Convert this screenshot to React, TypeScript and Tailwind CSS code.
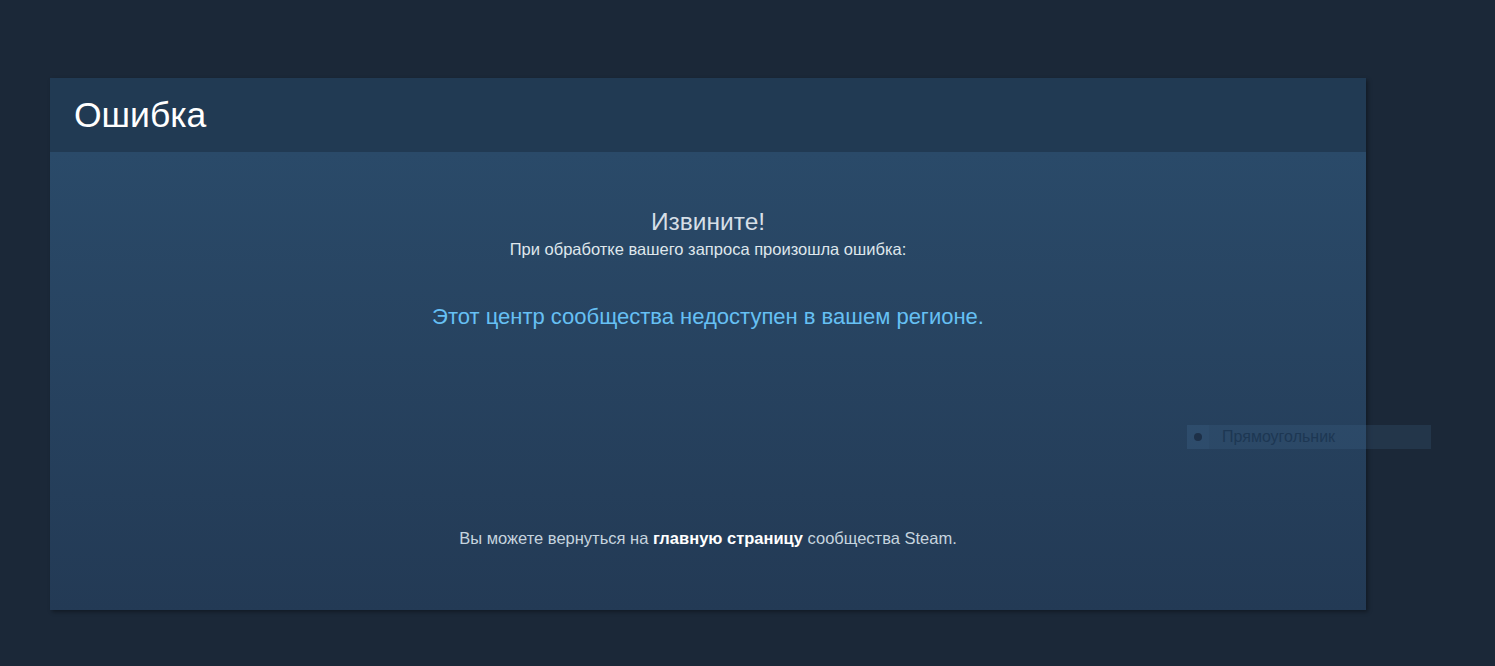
import { FC } from 'react';

const App: FC = () => {
  return (
    <div
      className="relative min-h-[666px] w-full bg-[#1b2838] pt-[78px] pl-[50px]"
      style={{ fontFamily: '"Liberation Sans", Arial, sans-serif' }}
    >
      {/* B Error panel */}
      <div className="w-[1316px] shadow-[2px_2px_4px_rgba(0,0,0,0.35)]">
        <div className="h-[74px] bg-[#213a53] pl-6 flex items-center">
          <h1 className="text-[35.5px] leading-none text-white pt-[2px]">Ошибка</h1>
        </div>
        <div className="h-[458px] bg-gradient-to-b from-[#2a4a69] to-[#233a55] flex flex-col items-center">
          <div className="mt-[55px] text-[24.5px] leading-[30px] text-[#d6dfe7]">Извините!</div>
          <div className="mt-[2px] text-[16.5px] leading-[20px] text-[#dfe6ec]">
            При обработке вашего запроса произошла ошибка:
          </div>
          <div className="mt-[45px] text-[22px] leading-[26px] text-[#66c0f4]">
            Этот центр сообщества недоступен в вашем регионе.
          </div>
          <div className="mt-[198px] text-[16.5px] leading-[20px] text-[#c6d4df]">
            Вы можете вернуться на{' '}
            <span className="font-bold text-white">главную страницу</span>{' '}
            сообщества Steam.
          </div>
        </div>
      </div>
      {/* E Error panel */}

      {/* Overlay label left over the screenshot */}
      <div className="absolute left-[1187px] top-[425px] w-[244px] h-[24px] bg-[rgba(70,110,150,0.2)] flex items-center">
        <div className="w-[22px] h-full flex items-center justify-center bg-[rgba(70,110,150,0.1)]">
          <div className="w-[8px] h-[8px] rounded-full bg-[#1d3048]" />
        </div>
        <span className="pl-[13px] text-[16px] text-[#1d3753]">Прямоугольник</span>
      </div>
    </div>
  );
};

export default App;
